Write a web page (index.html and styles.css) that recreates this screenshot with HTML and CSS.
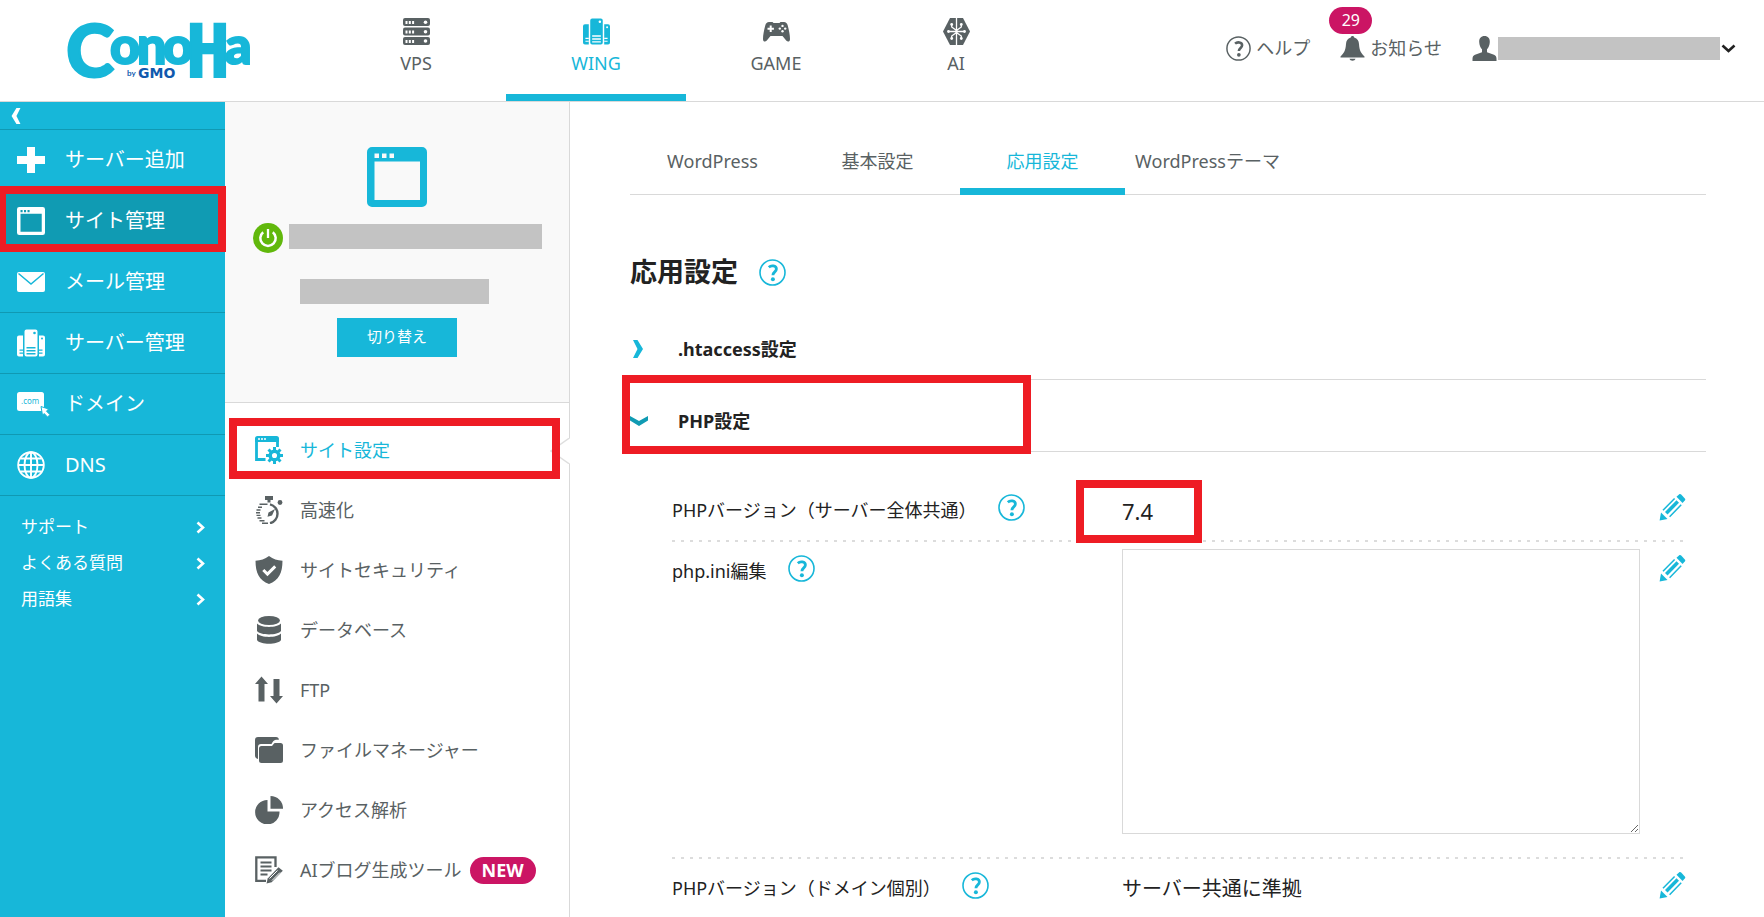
FILE: index.html
```html
<!DOCTYPE html>
<html lang="ja">
<head>
<meta charset="utf-8">
<title>ConoHa WING - 応用設定</title>
<meta name="viewport" content="width=device-width, initial-scale=1">
<link rel="stylesheet" href="styles.css">
</head>
<body>
<svg class="sprite" aria-hidden="true">
  <symbol id="i-help" viewBox="0 0 27 27"><circle cx="13.5" cy="13.5" r="12.5" fill="none" stroke="currentColor" stroke-width="1.6"/><path d="M9.800 8.200c2.200-2 7.600-1.900 7.600 1.900 0 2.800-3.500 2.900-3.500 6.200" fill="none" stroke="currentColor" stroke-width="2.800"/><circle cx="13.900" cy="20.300" r="2" fill="currentColor"/></symbol>
  <symbol id="i-pencil" viewBox="0 0 27 27"><g fill="currentColor"><path d="M17.500 2.800 20 .6c.8-.7 1.500-.6 2.200 0l3.600 3.800c.7.8.6 1.500 0 2.200l-2.300 2.400z"/><path d="M2 18.500l6.500 6.500L.6 26.500z"/><path d="M6 17.900 17.500 6.300l2.500 2.500L8.500 20.500z"/></g><path d="M4 16.300 15.600 4.400M10.600 22.800 22.200 10.800" stroke="currentColor" stroke-width="1.500"/></symbol>
  <symbol id="i-rack" viewBox="0 0 27 27"><g fill="currentColor"><rect width="27" height="8" rx="2"/><rect y="9.500" width="27" height="8" rx="2"/><rect y="19" width="27" height="8" rx="2"/></g><g fill="#fff"><path d="M2.500 3h2v3h-2zM5.800 3h2v3h-2zM9.100 3h2v3h-2zM2.500 12.500h2v3h-2zM5.800 12.500h2v3h-2zM9.100 12.500h2v3h-2zM2.500 22h2v3h-2zM5.800 22h2v3h-2zM9.100 22h2v3h-2z"/><circle cx="22.500" cy="4.300" r="1.800"/><circle cx="22.500" cy="13.700" r="1.800"/><circle cx="22.500" cy="23" r="1.800"/></g></symbol>
  <symbol id="i-server" viewBox="0 0 28 27"><g fill="currentColor"><path d="M9.500 0h9a2 2 0 0 1 2 2v23a2 2 0 0 1-2 2h-9a2 2 0 0 1-2-2V2a2 2 0 0 1 2-2zM2 6h4v21H2a2 2 0 0 1-2-2V8a2 2 0 0 1 2-2zM22 6h4a2 2 0 0 1 2 2v17a2 2 0 0 1-2 2h-4z"/></g><g class="cut"><circle cx="17.500" cy="3.500" r="1.300"/><circle cx="25" cy="9" r="1"/><path d="M9.500 17.500h9V19h-9zM9.500 20.500h9V22h-9zM9.500 23.500h9V25h-9zM2.500 20H6v1.200H2.500zM2.500 23H6v1.200H2.500zM22 20h3.500v1.200H22zM22 23h3.500v1.200H22z"/></g></symbol>
  <symbol id="i-game" viewBox="0 0 27 21"><path fill="currentColor" d="M6 1h3.500l1 1h6l1-1H21c2 .2 3 1.200 3.600 3C26 9 27 14 27 18c0 3-2.400 3.200-3.800 1.500L19.500 15h-12L3.800 19.500C2.400 21.200 0 21 0 18 0 14 1 9 2.400 4 3 2.200 4 1.200 6 1z"/><g fill="#fff"><path d="M6.700 4.500h2v2.200h2.200v2H8.700V11h-2V8.700H4.500v-2h2.200z"/><circle cx="19.500" cy="4.900" r="1.200"/><circle cx="19.500" cy="10.300" r="1.200"/><circle cx="16.800" cy="7.600" r="1.200"/><circle cx="22.200" cy="7.600" r="1.200"/></g></symbol>
  <symbol id="i-ai" viewBox="0 0 27 27"><path fill="currentColor" d="M7 0h13l7 13.500L20 27H7L0 13.500z"/><g stroke="#fff" stroke-width="1.300" fill="none"><path d="M13.500 0v27M5 13.500h17M8.700 6v3l4.800 3.500M18.300 6v3l-4.800 3.500M8.700 21v-3l4.800-3.500M18.300 21v-3l-4.800-3.500"/></g><g fill="#fff"><circle cx="5.500" cy="13.500" r="1.400"/><circle cx="21.500" cy="13.500" r="1.400"/><circle cx="8.700" cy="6.500" r="1.400"/><circle cx="18.300" cy="6.500" r="1.400"/><circle cx="8.700" cy="20.500" r="1.400"/><circle cx="18.300" cy="20.500" r="1.400"/></g></symbol>
  <symbol id="i-bell" viewBox="0 0 24 25"><path fill="currentColor" d="M12 0c1 0 1.600.6 1.700 1.600 3.300 1 4.600 3.500 4.800 6.400.4 6.500 2 9 5.500 12.500v1H0v-1C3.500 17 5.100 14.500 5.500 8c.2-2.900 1.500-5.400 4.800-6.400C10.400.6 11 0 12 0zM9 22.800h6c-.5 2.600-5.500 2.600-6 0z"/></symbol>
  <symbol id="i-user" viewBox="0 0 24 25"><path fill="currentColor" d="M12 0c3.500 0 5.500 2.400 5.300 6-.1 3-1.300 5.800-2.800 7.200v3l7 2.600c1.800.8 2.500 2 2.500 4V25H0v-2.200c0-2 .7-3.200 2.500-4l7-2.600v-3C8 11.800 6.800 9 6.700 6 6.500 2.400 8.500 0 12 0z"/></symbol>
  <symbol id="i-down" viewBox="0 0 15 9"><path d="M1.500 1.500l6 5.500 6-5.500" fill="none" stroke="currentColor" stroke-width="2.600"/></symbol>
  <symbol id="i-right" viewBox="0 0 9 13"><path d="M1.500 1.500l5.500 5-5.500 5" fill="none" stroke="currentColor" stroke-width="2.600"/></symbol>
  <symbol id="i-angle" viewBox="0 0 10 18"><path d="M0 0h4.500L10 9l-5.500 9H0l4.500-9z" fill="currentColor"/></symbol>
  <symbol id="i-angle-down" viewBox="0 0 18 10"><path d="M0 0v4.500L9 10l9-5.500V0L9 5z" fill="currentColor"/></symbol>
  <symbol id="i-plus" viewBox="0 0 28 26"><path fill="currentColor" d="M10 0h8v9h10v8H18v9h-8v-9H0V9h10z"/></symbol>
  <symbol id="i-window" viewBox="0 0 60 60"><path fill="currentColor" fill-rule="evenodd" d="M5 0h50a5 5 0 0 1 5 5v50a5 5 0 0 1-5 5H5a5 5 0 0 1-5-5V5a5 5 0 0 1 5-5zM7.500 6.500v4.500H12V6.500zM15 6.500v4.500h4.500V6.500zM22.500 6.500v4.500H27V6.500zM7.500 14.500v38.500h45.500V14.500z"/></symbol>
  <symbol id="i-mail" viewBox="0 0 28 20"><rect width="28" height="20" rx="2" fill="currentColor"/><path d="M1.500 1.500 14 12 26.500 1.500" class="cut-line"/></symbol>
  <symbol id="i-globe" viewBox="0 0 28 28"><g fill="none" stroke="currentColor" stroke-width="1.900"><circle cx="14" cy="14" r="12.800"/><ellipse cx="14" cy="14" rx="6.500" ry="12.800"/><path d="M14 1v26M1.500 14h25M3.500 7.500h21M3.500 20.500h21"/></g></symbol>
  <symbol id="i-power" viewBox="0 0 30 30"><circle cx="15" cy="15" r="15" fill="#61b80c"/><path d="M10.200 9.200a7.700 7.700 0 1 0 9.600 0" fill="none" stroke="#fff" stroke-width="2.500"/><path d="M15 6v9" stroke="#fff" stroke-width="2.300"/></symbol>
  <symbol id="i-site" viewBox="0 0 28 28"><path d="M1.500 3.500v20h9M22.500 5v6" fill="none" stroke="currentColor" stroke-width="2.800"/><path d="M2.500 0h19a2.500 2.500 0 0 1 2.500 2.500V6H0V2.500A2.500 2.500 0 0 1 2.500 0z" fill="currentColor"/><path d="M3 2.300h2v1.500H3zM6 2.300h2v1.500H6zM9 2.300h2v1.500H9z" fill="#fff"/><circle cx="19.500" cy="19.500" r="4.300" fill="none" stroke="currentColor" stroke-width="3.500"/><path d="M19.500 11v3M19.500 25v3M11 19.500h3M25 19.500h3M13.500 13.500l2.200 2.200M23.300 23.300l2.200 2.200M13.500 25.500l2.200-2.200M23.300 15.700l2.200-2.200" stroke="currentColor" stroke-width="3"/></symbol>
  <symbol id="i-watch" viewBox="0 0 28 28"><path d="M15 8.300a9.700 9.700 0 0 1 0 18.900" fill="none" stroke="currentColor" stroke-width="2.400"/><path d="M10 0h8v4h-2.500v2.500h-3V4H10z" fill="currentColor"/><circle cx="25" cy="6.500" r="2.400" fill="currentColor"/><path d="M20 13l-3 6.500-4.500 1.200 1-4.200z" fill="currentColor"/><path d="M4.500 8.300h8M3 11.200h4M1.500 14h4M1 16.700h4M1.500 19.400h4M2.500 22h4M4.500 24.700h5M7 27.200h6" stroke="currentColor" stroke-width="1.400"/></symbol>
  <symbol id="i-shield" viewBox="0 0 26 27"><path d="M13 0c4 3 8 4.500 13 4.500C26 16 22.500 23.500 13 27 3.500 23.500 0 16 0 4.500 5 4.500 9 3 13 0z" fill="currentColor"/><path d="M7.500 13.500l4 4 7.500-7.500" fill="none" stroke="#fff" stroke-width="2.800"/></symbol>
  <symbol id="i-db" viewBox="0 0 24 28"><g fill="currentColor"><ellipse cx="12" cy="4.500" rx="11" ry="4.500"/><path d="M0 7.500c4 4.500 20 4.500 24 0V15c-3 4.500-21 4.500-24 0zM0 17.500c4 4.500 20 4.500 24 0V24c-3 5-21 5-24 0z"/></g></symbol>
  <symbol id="i-ftp" viewBox="0 0 28 27"><path fill="currentColor" d="M6.500 0 13 7.500H9.500V25h-6V7.500H0zM18.500 2.500h6v17H28L21.500 27 15 19.500h3.500z"/></symbol>
  <symbol id="i-folder" viewBox="0 0 28 26"><g fill="currentColor"><path d="M3 0h18c1.800 0 2.800.8 2.900 2.800-3-.2-5 0-6.400 2.400L16.500 7H6c-1.900 0-3 1-3 3v12C1 21.500 0 20.500 0 18.500V3a3 3 0 0 1 3-3z"/><path d="M6.500 9H17l2-2.400c.5-.5 1-.6 1.800-.6h4.700A2.500 2.500 0 0 1 28 8.500v15a2.500 2.500 0 0 1-2.500 2.500h-19A2.500 2.500 0 0 1 4 23.500v-12A2.500 2.500 0 0 1 6.500 9z"/></g></symbol>
  <symbol id="i-pie" viewBox="0 0 28 28"><g fill="currentColor"><path d="M12.500 4v11.500h12A12.200 12.200 0 1 1 12.500 4z"/><path d="M15.500 0A12.500 12.500 0 0 1 28 12.700H15.500z"/></g></symbol>
  <symbol id="i-blog" viewBox="0 0 28 28"><path d="M20.500 11V1.300H1.300v23.500H11" fill="none" stroke="currentColor" stroke-width="2.300"/><path d="M5.500 6.500h11M5.500 10.500h11M5.500 14.500h11M5.500 18.500h7" stroke="currentColor" stroke-width="1.800"/><path d="M11.500 27.500l1.200-5L23.500 11.300l4.300 3.500L16.700 26.300z" fill="currentColor"/><path d="M14.500 22.500l8-8M17 24.500l8-8" stroke="#fff" stroke-width="1"/></symbol>
</svg>

<header class="header">
  <a class="logo" href="#" aria-label="ConoHa by GMO">
    <svg class="logo-art" viewBox="0 0 200 60">
      <text class="logo-main" y="56"><tspan class="logo-c" x="0">C</tspan><tspan x="44 71 97" y="43">ono</tspan><tspan class="logo-h" x="120" y="56">H</tspan><tspan x="159" y="43">a</tspan></text>
      <text class="logo-by" x="61" y="55">by <tspan class="logo-gmo" x="72" y="57">GMO</tspan></text>
    </svg>
  </a>
  <nav class="services">
    <a href="#" class="service"><svg class="ic27"><use href="#i-rack"/></svg>VPS</a>
    <a href="#" class="service is-active"><svg class="ic27"><use href="#i-server"/></svg>WING</a>
    <a href="#" class="service"><svg class="ic27"><use href="#i-game"/></svg>GAME</a>
    <a href="#" class="service"><svg class="ic27"><use href="#i-ai"/></svg>AI</a>
  </nav>
  <div class="account">
    <a href="#" class="tool"><svg class="ic25"><use href="#i-help"/></svg>ヘルプ</a>
    <a href="#" class="tool"><svg class="ic25"><use href="#i-bell"/></svg>お知らせ<span class="count">29</span></a>
    <button type="button" class="user" aria-label="アカウント"><svg class="ic25"><use href="#i-user"/></svg><span class="mask mask-user"></span><svg class="caret"><use href="#i-down"/></svg></button>
  </div>
</header>

<div class="body">
  <aside class="side">
    <button type="button" class="collapse" aria-label="閉じる"><svg class="flip"><use href="#i-angle"/></svg></button>
    <nav>
      <a href="#" class="side-item"><svg class="ic28"><use href="#i-plus"/></svg>サーバー追加</a>
      <a href="#" class="side-item is-active"><svg class="ic28"><use href="#i-window"/></svg>サイト管理<span class="frame frame-side"></span></a>
      <a href="#" class="side-item"><svg class="ic28"><use href="#i-mail"/></svg>メール管理</a>
      <a href="#" class="side-item"><svg class="ic28"><use href="#i-server"/></svg>サーバー管理</a>
      <a href="#" class="side-item"><svg class="ic-domain" viewBox="0 0 34 26"><rect y="1" width="27" height="19" rx="2.500" fill="currentColor"/><text x="4" y="13" class="com">.com</text><path d="M24 15.500l7.500 2.500-2 2.200 3.500 3.500-2.500 2.300-3.300-3.500-1.700 1.800z" fill="currentColor" stroke="#17b7d9"/></svg>ドメイン</a>
      <a href="#" class="side-item"><svg class="ic28"><use href="#i-globe"/></svg>DNS</a>
    </nav>
    <nav class="links">
      <a href="#">サポート<svg><use href="#i-right"/></svg></a>
      <a href="#">よくある質問<svg><use href="#i-right"/></svg></a>
      <a href="#">用語集<svg><use href="#i-right"/></svg></a>
    </nav>
  </aside>

  <section class="sub">
    <div class="site-card">
      <svg class="site-icon"><use href="#i-window"/></svg>
      <div class="site-name"><svg class="ic30"><use href="#i-power"/></svg><span class="mask mask-name"></span></div>
      <span class="mask mask-domain"></span>
      <button type="button" class="switch">切り替え</button>
    </div>
    <nav class="menu">
      <a href="#" class="is-active"><svg class="ic28"><use href="#i-site"/></svg>サイト設定<svg class="notch" viewBox="0 0 20 26"><path d="M20 0 1 13l19 13z" fill="#fff"/><path d="M19.500 0 1 13l18.500 13" fill="none" stroke="#dedede" stroke-width="1.500"/></svg><span class="frame frame-menu"></span></a>
      <a href="#"><svg class="ic28"><use href="#i-watch"/></svg>高速化</a>
      <a href="#"><svg class="ic28"><use href="#i-shield"/></svg>サイトセキュリティ</a>
      <a href="#"><svg class="ic28"><use href="#i-db"/></svg>データベース</a>
      <a href="#"><svg class="ic28"><use href="#i-ftp"/></svg>FTP</a>
      <a href="#"><svg class="ic28"><use href="#i-folder"/></svg>ファイルマネージャー</a>
      <a href="#"><svg class="ic28"><use href="#i-pie"/></svg>アクセス解析</a>
      <a href="#"><svg class="ic28"><use href="#i-blog"/></svg>AIブログ生成ツール<span class="new">NEW</span></a>
    </nav>
  </section>

  <main class="main">
    <nav class="tabs">
      <a href="#">WordPress</a>
      <a href="#">基本設定</a>
      <a href="#" class="is-active">応用設定</a>
      <a href="#">WordPressテーマ</a>
    </nav>
    <h1 class="title">応用設定<button type="button" class="help" aria-label="ヘルプ"><svg class="ic27"><use href="#i-help"/></svg></button></h1>
    <h2 class="section"><button type="button"><span class="mark"><svg width="10" height="18"><use href="#i-angle"/></svg></span>.htaccess設定</button></h2>
    <h2 class="section is-open"><button type="button"><span class="mark"><svg width="18" height="10"><use href="#i-angle-down"/></svg></span>PHP設定</button><span class="frame frame-section"></span></h2>
    <div class="rows">
      <div class="row">
        <div class="name">PHPバージョン（サーバー全体共通）<button type="button" class="help" aria-label="ヘルプ"><svg class="ic27"><use href="#i-help"/></svg></button></div>
        <div class="value"><span class="version">7.4</span><span class="frame frame-version"></span></div>
        <button type="button" class="edit" aria-label="編集"><svg class="ic27"><use href="#i-pencil"/></svg></button>
      </div>
      <div class="row row-ini">
        <div class="name"><label for="ini">php.ini編集</label><button type="button" class="help" aria-label="ヘルプ"><svg class="ic27"><use href="#i-help"/></svg></button></div>
        <textarea id="ini" class="ini"></textarea>
        <button type="button" class="edit" aria-label="編集"><svg class="ic27"><use href="#i-pencil"/></svg></button>
      </div>
      <div class="row">
        <div class="name">PHPバージョン（ドメイン個別）<button type="button" class="help" aria-label="ヘルプ"><svg class="ic27"><use href="#i-help"/></svg></button></div>
        <div class="value">サーバー共通に準拠</div>
        <button type="button" class="edit" aria-label="編集"><svg class="ic27"><use href="#i-pencil"/></svg></button>
      </div>
    </div>
  </main>
</div>
</body>
</html>
```
FILE: styles.css
```css
* { box-sizing: border-box; }
body {
  margin: 0;
  min-height: 100vh;
  display: flex;
  flex-direction: column;
  background: #fff;
  color: #222;
  font: 400 18px/28px "Noto Sans", "Noto Sans CJK JP", sans-serif;
}
a { color: inherit; text-decoration: none; }
button { font: inherit; color: inherit; background: none; border: 0; padding: 0; cursor: pointer; }
svg { display: block; flex: none; }
.sprite { position: absolute; width: 0; height: 0; }
.ic25 { width: 25px; height: 25px; }
.ic27 { width: 27px; height: 27px; }
.ic28 { width: 28px; height: 28px; }
.ic30 { width: 30px; height: 30px; }
.mask { display: block; background: #c3c3c3; }
.frame { position: absolute; border: 8px solid #ee1c24; pointer-events: none; z-index: 2; }
.cut { fill: var(--cut, #fff); }
.cut-line { fill: none; stroke: #17b7d9; stroke-width: 1.5; }

/* header */
.header {
  display: flex;
  align-items: stretch;
  height: 102px;
  border-bottom: 1px solid #d9d9d9;
  color: #596163;
}
.logo { width: 326px; padding: 21px 0 0 66px; }
.logo-art { width: 200px; height: 60px; overflow: visible; }
.logo-main { fill: #17b7d9; stroke: #17b7d9; stroke-width: 2; font: 900 52px Lato, sans-serif; }
.logo-c { font-size: 73px; }
.logo-h { font: 700 73px "DejaVu Sans Mono", monospace; }
.logo-by { fill: #1059ae; font: 700 8px Lato, sans-serif; }
.logo-gmo { font: 700 14px "DejaVu Sans", sans-serif; }
.services { display: flex; }
.service {
  width: 180px;
  display: flex;
  flex-direction: column;
  align-items: center;
  gap: 4px;
  padding-top: 18px;
}
.service.is-active { color: #17b7d9; border-bottom: 7px solid #17b7d9; }
.account { display: flex; gap: 30px; margin-left: auto; padding: 34px 28px 0 0; align-items: flex-start; }
.tool { position: relative; display: flex; align-items: center; gap: 5px; }
.user { display: flex; align-items: center; height: 28px; gap: 1px; }
.mask-user { width: 222px; height: 23px; }
.caret { width: 15px; height: 9px; color: #222; }
.count {
  position: absolute;
  left: -11px;
  top: -27px;
  width: 43px;
  border-radius: 14px;
  background: #cb1564;
  color: #fff;
  font-size: 16px;
  line-height: 27px;
  text-align: center;
}

.body { flex: 1; display: flex; align-items: stretch; }

/* side navigation */
.side { --cut: #17b7d9; width: 225px; flex: none; background: #17b7d9; color: #fff; }
.collapse { display: flex; align-items: center; width: 100%; height: 28px; padding-left: 11px; border-bottom: 1px solid #1099b3; }
.flip { width: 10px; height: 16px; transform: scaleX(-1); }
.side-item {
  position: relative;
  display: flex;
  align-items: center;
  gap: 20px;
  height: 61px;
  padding-left: 17px;
  border-bottom: 1px solid #1099b3;
  font-size: 20px;
}
.side-item.is-active { background: #109bb3; }
.frame-side { left: -2px; right: -1px; top: -5px; bottom: -1px; }
.ic-domain { width: 34px; height: 26px; margin-right: -6px; }
.com { fill: #17b7d9; font: 400 8px "Noto Sans", sans-serif; }
.links { padding: 13px 20px 0 21px; font-size: 17px; line-height: 36px; }
.links a { display: flex; align-items: center; justify-content: space-between; }
.links svg { width: 9px; height: 13px; }

/* site column */
.sub { width: 345px; flex: none; border-right: 1px solid #d9d9d9; color: #596163; }
.site-card {
  display: flex;
  flex-direction: column;
  align-items: center;
  height: 301px;
  padding-top: 45px;
  background: #f9f9f9;
  border-bottom: 1px solid #d9d9d9;
}
.site-icon { width: 60px; height: 60px; color: #17b7d9; }
.site-name { display: flex; gap: 6px; margin-top: 16px; }
.mask-name { width: 253px; height: 25px; margin-top: 1px; }
.mask-domain { width: 189px; height: 25px; margin: 26px 6px 0 0; }
.switch { width: 120px; height: 39px; margin-top: 14px; padding-bottom: 3px; background: #17b7d9; color: #fff; font-size: 15px; }
.menu { padding-top: 17px; }
.menu a { position: relative; display: flex; align-items: center; gap: 17px; height: 60px; padding-left: 30px; }
.menu .is-active { color: #17b7d9; }
.frame-menu { left: 4px; right: 9px; top: -2px; bottom: 1px; }
.notch { position: absolute; right: -1px; top: 18px; width: 20px; height: 26px; }
.new { margin-left: -9px; padding: 0 12px; border-radius: 14px; background: #cb1564; color: #fff; font-weight: 700; line-height: 27px; }

/* main */
.main { flex: 1; min-width: 0; padding: 0 58px 0 60px; }
.tabs { display: flex; height: 93px; border-bottom: 1px solid #d9d9d9; color: #596163; }
.tabs a { width: 165px; height: 93px; padding-top: 45px; text-align: center; white-space: nowrap; }
.tabs .is-active { color: #17b7d9; border-bottom: 7px solid #17b7d9; }
.title { display: flex; align-items: center; gap: 21px; margin: 57px 0 16px; font-size: 27px; line-height: 40px; }
.help { color: #17b7d9; }
.section { position: relative; margin: 0; border-bottom: 1px solid #d9d9d9; font-size: 18px; line-height: 28px; }
.section button { display: flex; width: 100%; align-items: center; padding: 27px 0 16px; }
.mark { display: flex; width: 48px; padding-left: 3px; color: #17b7d9; }
.is-open .mark { padding-left: 0; color: #109bb3; }
.frame-section { left: -8px; top: -5px; width: 409px; bottom: -3px; }
.rows { padding: 29px 20px 0 42px; }
.row {
  display: grid;
  grid-template-columns: 450px minmax(0, 1fr) 27px;
  height: 61px;
  padding-top: 13px;
  background: repeating-linear-gradient(90deg, #dcdcdc 0 3px, transparent 3px 9px) bottom / 100% 2px no-repeat;
}
.row:last-child { background: none; }
.row-ini { height: auto; padding-bottom: 25px; padding-top: 7px; }
.row-ini .name, .row-ini .edit { margin-top: 6px; }
.name { display: flex; align-items: center; gap: 21px; height: 31px; }
.name .help { align-self: flex-start; }
.value { position: relative; font-size: 20px; padding-top: 3px; }
.version { font-size: 22px; }
.frame-version { left: -46px; top: -14px; width: 126px; height: 63px; }
.ini { display: block; height: 285px; margin: 0 19px 0 0; border: 1px solid #d9d9d9; resize: both; }
.edit { color: #17b7d9; height: 27px; }
```
